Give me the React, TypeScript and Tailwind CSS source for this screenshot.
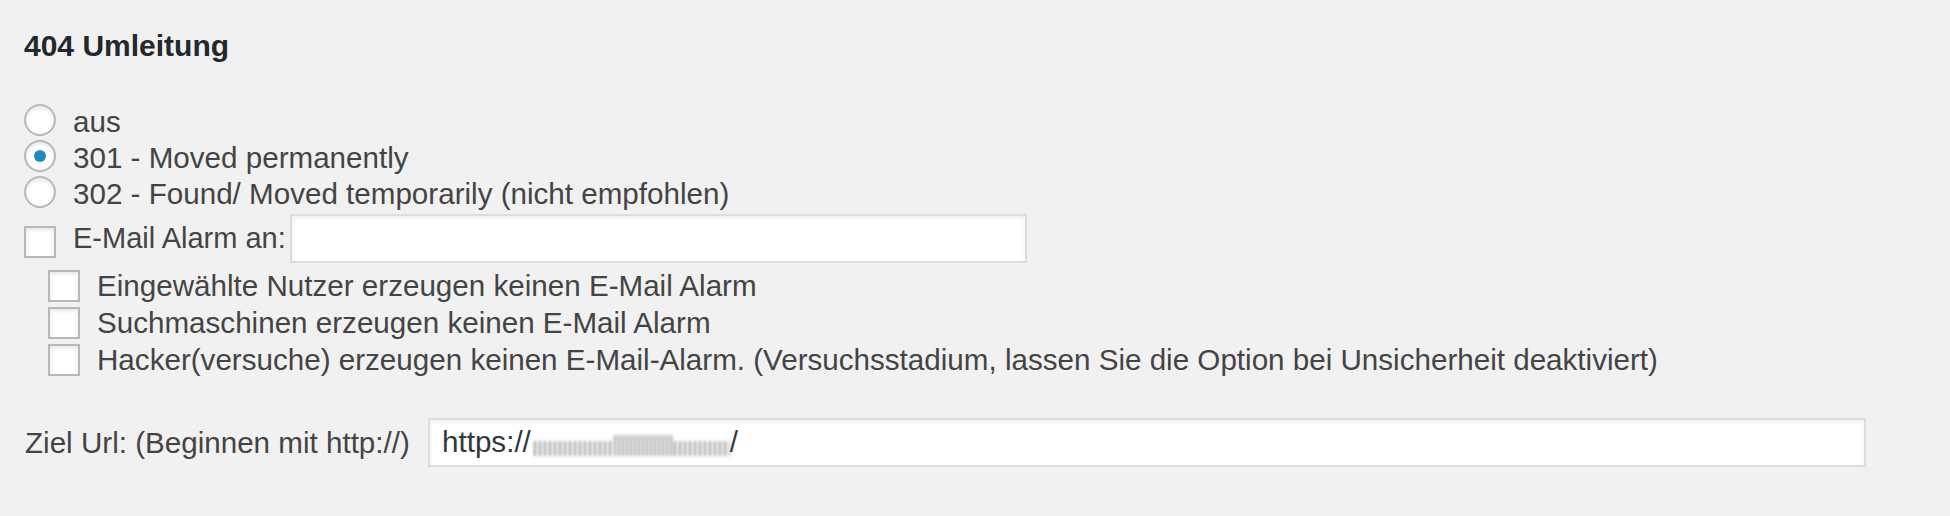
import React from "react";

function Radio({ checked, label }: { checked?: boolean; label: string }) {
  return (
    <div className="flex items-center h-[36px]">
      <span className="w-[32px] h-[32px] shrink-0 rounded-full border-2 border-[#b4b9be] bg-white shadow-[inset_0_2px_4px_rgba(0,0,0,0.1)] flex items-center justify-center">
        {checked && <span className="w-[12px] h-[12px] rounded-full bg-[#1e8cbe]" />}
      </span>
      <span className="ml-[17px] pt-[4px] leading-[32px] whitespace-nowrap">{label}</span>
    </div>
  );
}

function Box() {
  return (
    <span className="w-[32px] h-[32px] shrink-0 border-2 border-[#b4b9be] bg-white shadow-[inset_0_2px_4px_rgba(0,0,0,0.1)]" />
  );
}

function SubCheck({ label }: { label: string }) {
  return (
    <div className="flex items-center h-[37px]">
      <Box />
      <span className="ml-[17px] leading-[37px] whitespace-nowrap">{label}</span>
    </div>
  );
}

export default function App() {
  return (
    <div className="w-full h-[516px] bg-[#f1f1f1] pl-[24px] pt-[28px] text-[29.6px] text-[#444] font-['Liberation_Sans',Arial,sans-serif] overflow-hidden">
      <h2 className="leading-[36px] font-bold text-[#23282d] text-[30px]">404 Umleitung</h2>

      <div className="mt-[38px]">
        <Radio label="aus" />
        <Radio checked label="301 - Moved permanently" />
        <Radio label="302 - Found/ Moved temporarily (nicht empfohlen)" />
      </div>

      <div className="mt-[4px] flex items-start h-[49px]">
        <span className="mt-[12px] flex">
          <Box />
        </span>
        <span className="ml-[17px] w-[217px] shrink-0 text-[29px] leading-[49px] whitespace-nowrap">E-Mail Alarm an:</span>
        <div className="w-[737px] shrink-0 h-[49px] border-2 border-[#dddddd] bg-white shadow-[inset_0_2px_4px_rgba(0,0,0,0.07)]" />
      </div>

      <div className="mt-[4px] pl-[24px]">
        <SubCheck label="Eingewählte Nutzer erzeugen keinen E-Mail Alarm" />
        <SubCheck label="Suchmaschinen erzeugen keinen E-Mail Alarm" />
        <SubCheck label="Hacker(versuche) erzeugen keinen E-Mail-Alarm. (Versuchsstadium, lassen Sie die Option bei Unsicherheit deaktiviert)" />
      </div>

      <div className="mt-[40px] flex items-center h-[49px]">
        <span className="w-[404px] shrink-0 pl-[1px] leading-[49px] whitespace-nowrap">Ziel Url: (Beginnen mit http://)</span>
        <div className="w-[1438px] shrink-0 h-[49px] border-2 border-[#dddddd] bg-white shadow-[inset_0_2px_4px_rgba(0,0,0,0.07)] flex items-center px-[12px] text-[#32373c] whitespace-nowrap">
          <span>https://</span>
          <span className="ml-[3px] mt-[6px] w-[196px] h-[20px] flex items-end blur-[1.5px] opacity-80">
            <span className="w-[80px] h-[15px] bg-[repeating-linear-gradient(90deg,#777_0px,#777_2px,transparent_2px,transparent_5px)]" />
            <span className="w-[60px] h-[21px] bg-[repeating-linear-gradient(90deg,#888_0px,#888_2px,transparent_2px,transparent_4px)]" />
            <span className="w-[56px] h-[15px] bg-[repeating-linear-gradient(90deg,#777_0px,#777_2px,transparent_2px,transparent_5px)]" />
          </span>
          <span>/</span>
        </div>
      </div>
    </div>
  );
}
